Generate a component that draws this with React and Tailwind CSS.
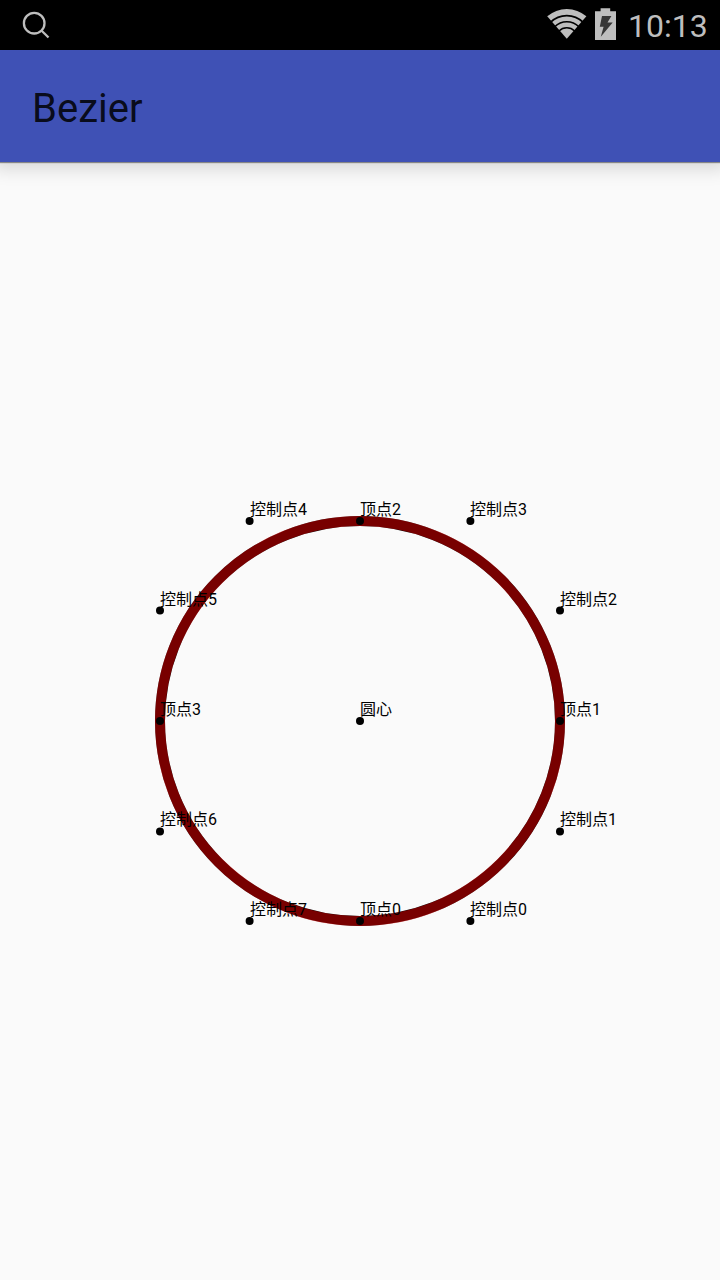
const points = [
  { x: 360, y: 721, label: '圆心' },
  { x: 360, y: 921, label: '顶点0' },
  { x: 560, y: 721, label: '顶点1' },
  { x: 360, y: 521, label: '顶点2' },
  { x: 160, y: 721, label: '顶点3' },
  { x: 470.4, y: 921, label: '控制点0' },
  { x: 560, y: 831.4, label: '控制点1' },
  { x: 560, y: 610.6, label: '控制点2' },
  { x: 470.4, y: 521, label: '控制点3' },
  { x: 249.6, y: 521, label: '控制点4' },
  { x: 160, y: 610.6, label: '控制点5' },
  { x: 160, y: 831.4, label: '控制点6' },
  { x: 249.6, y: 921, label: '控制点7' },
];

function StatusBar() {
  return (
    <div className="flex h-[50px] shrink-0 items-center justify-between bg-black pl-[20px] pr-[12px] text-[#bebebe]">
      <svg width="32" height="50" viewBox="20 0 32 50" fill="none" stroke="currentColor" strokeWidth="2.3">
        <circle cx="34.2" cy="23.2" r="10.3" />
        <path d="M41.2 30.2 48.5 37.5" />
      </svg>
      <div className="flex items-center">
        <svg width="72" height="50" viewBox="546 0 72 50">
          <path d="M547.2 16.3A30 30 0 0 1 586.4 16.3L566.8 38.8Z" fill="#bebebe" />
          <g fill="none" stroke="#000" strokeWidth="1.6">
            <circle cx="566.8" cy="38.8" r="23.2" />
            <circle cx="566.8" cy="38.8" r="17.1" />
            <circle cx="566.8" cy="38.8" r="11" />
          </g>
          <path d="M600.6 8.3H610.2V11.3H616V40H595V11.3H600.6Z" fill="#bebebe" />
          <path d="M602 16H611.4L607.5 22.5H612.7L600.8 36.7L603.6 26.8H599.8Z" fill="#363636" />
        </svg>
        <span className="ml-[10px] mt-[3px] w-[80px] whitespace-nowrap font-['Roboto',sans-serif] text-[32px] leading-[47px]">10:13</span>
      </div>
    </div>
  );
}

function BezierCanvas() {
  return (
    <svg className="block" width="720" height="1118" viewBox="0 162 720 1118">
      <g fill="none" strokeWidth="10">
        <circle cx="360" cy="721" r="200" stroke="#000" />
        <path
          d="M360 921C470.4 921 560 831.4 560 721S470.4 521 360 521S160 610.6 160 721S249.6 921 360 921Z"
          stroke="#ff0000"
          strokeOpacity="0.47"
        />
      </g>
      {points.map(({ x, y, label }) => (
        <g key={label}>
          <circle cx={x} cy={y} r="4" />
          <text x={Math.round(x)} y={Math.round(y - 6)} className="font-['Roboto','Noto_Sans_CJK_SC',sans-serif] text-[16px]">
            {label}
          </text>
        </g>
      ))}
    </svg>
  );
}

export default function App() {
  return (
    <div className="flex h-[1280px] w-[720px] flex-col overflow-hidden bg-[#fafafa]">
      <StatusBar />
      <header className="z-10 flex h-[112px] shrink-0 items-center bg-[#3f51b5] px-8 pt-[6px] shadow-[0_1px_1px_rgba(0,0,0,0.4),0_2px_16px_6px_rgba(0,0,0,0.13)] [clip-path:inset(0_0_-40px_0)]">
        <h1 className="font-['Roboto',sans-serif] text-[40px] leading-none text-black/87">Bezier</h1>
      </header>
      <BezierCanvas />
    </div>
  );
}
